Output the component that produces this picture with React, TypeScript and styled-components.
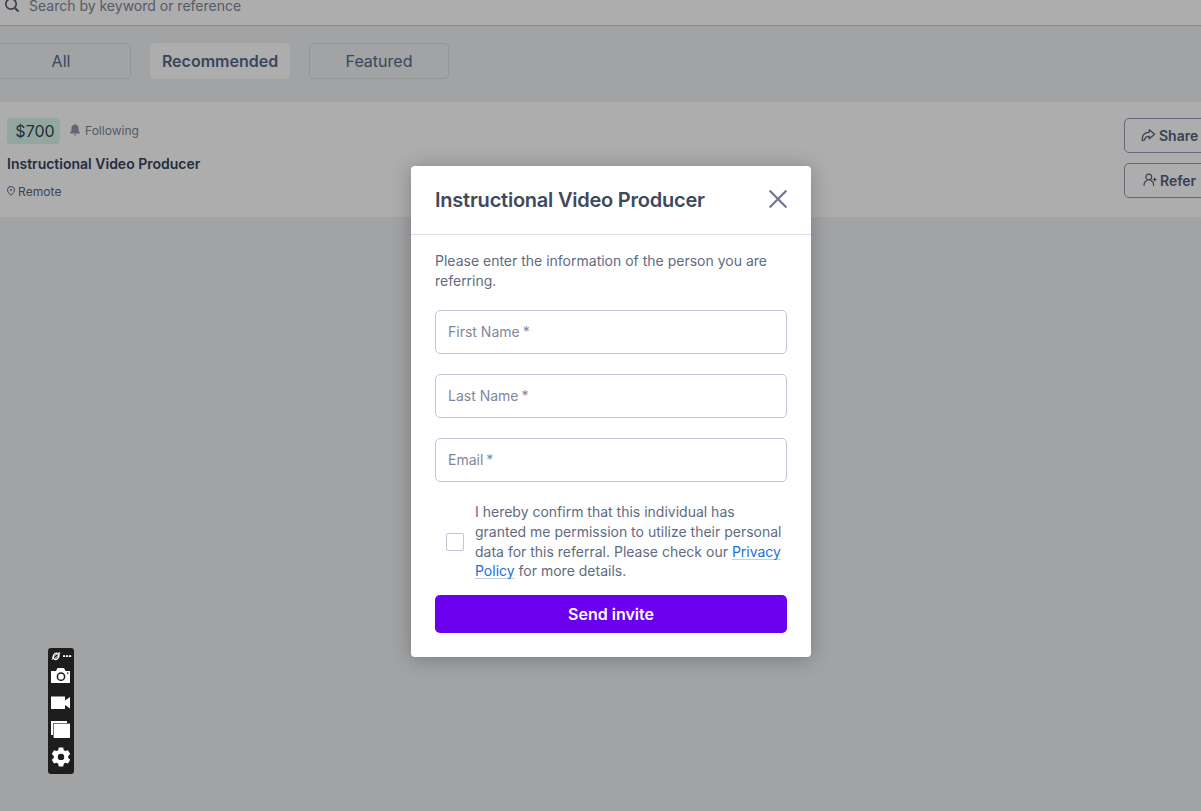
import React from 'react';
import styled, { createGlobalStyle } from 'styled-components';

const Global = createGlobalStyle`
  * { box-sizing: border-box; }
  body { margin: 0; overflow: hidden; font-family: Inter, sans-serif; background: #edf0f2; }
`;

const Page = styled.div`
  position: relative;
  width: 1201px;
  height: 811px;
  overflow: hidden;
  background: #edf0f2;
`;

const SearchBar = styled.header`
  display: flex;
  align-items: flex-start;
  gap: 9px;
  height: 26px;
  padding-left: 4px;
  background: #fff;
  border-bottom: 1px solid #c0c8d8;
  color: #7e8797;
  font-size: 14px;
  line-height: 12px;
  svg { flex: none; margin-top: -4px; color: #56617a; }
`;

const Tabs = styled.nav`
  display: flex;
  gap: 19px;
  padding: 17px 0 23px;
  margin-left: -9px;
`;

const Tab = styled.button<{ $active?: boolean }>`
  width: 140px;
  height: 36px;
  padding: 0;
  border: 1px solid ${(p) => (p.$active ? '#fff' : '#dadee4')};
  border-radius: 4px;
  background: ${(p) => (p.$active ? '#fff' : 'transparent')};
  color: #546a8a;
  font: ${(p) => (p.$active ? 600 : 400)} 16px/24px Inter, sans-serif;
`;

const JobCard = styled.article`
  display: flex;
  justify-content: space-between;
  height: 115px;
  padding: 16px 0 0 7px;
  background: #fff;
`;

const JobInfo = styled.div`
  display: flex;
  flex-direction: column;
`;

const PriceRow = styled.div`
  display: flex;
  align-items: center;
  gap: 9px;
`;

const Price = styled.span`
  width: 53px;
  height: 26px;
  padding-left: 3px;
  border-radius: 4px;
  background: #d9f7ea;
  color: #38445a;
  font-size: 16px;
  line-height: 26px;
  text-align: center;
`;

const Following = styled.span`
  display: flex;
  align-items: center;
  gap: 4px;
  color: #7e8797;
  font-size: 12px;
  letter-spacing: 0.02px;
  line-height: 16px;
  svg { margin-top: -2px; }
`;

const JobTitle = styled.h2`
  margin: 10px 0 0;
  color: #38445a;
  font-size: 14px;
  font-weight: 600;
  line-height: 20px;
`;

const Location = styled.span`
  display: flex;
  align-items: center;
  gap: 3px;
  margin-top: 10px;
  color: #56688a;
  font-size: 12px;
  letter-spacing: 0.08px;
  line-height: 16px;
  svg { margin-top: -2px; }
`;

const Actions = styled.div`
  display: flex;
  flex-direction: column;
  gap: 10px;
  width: 77px;
`;

const ActionButton = styled.button<{ $indent: number }>`
  display: flex;
  align-items: center;
  gap: 3px;
  width: 100px;
  height: 35px;
  padding: 0 0 0 ${(p) => p.$indent}px;
  border: 1px solid #929cb0;
  border-radius: 5px;
  background: #fff;
  color: #56617a;
  font: 600 14px/20px Inter, sans-serif;
  svg { margin-top: -2px; }
`;

const Backdrop = styled.div`
  position: absolute;
  inset: 0;
  display: flex;
  justify-content: center;
  align-items: flex-start;
  padding: 166px 0 0 21px;
  background: rgba(0, 0, 0, 0.32);
`;

const Dialog = styled.section`
  width: 400px;
  height: 491px;
  border-radius: 4px;
  background: #fff;
  box-shadow: 0 2px 20px rgba(0, 0, 0, 0.25);
`;

const DialogHeader = styled.header`
  display: flex;
  align-items: center;
  justify-content: space-between;
  height: 69px;
  padding: 0 24px;
  border-bottom: 1px solid #dcdde9;
`;

const DialogTitle = styled.h1`
  margin: 0;
  color: #40495a;
  font-size: 20px;
  font-weight: 600;
  letter-spacing: -0.23px;
  line-height: 28px;
`;

const CloseButton = styled.button`
  display: flex;
  padding: 0 0 2px;
  border: 0;
  background: none;
  color: #6e7891;
`;

const DialogBody = styled.form`
  display: flex;
  flex-direction: column;
  padding: 16px 24px 24px;
`;

const Text = styled.p`
  margin: 0;
  color: #5f6b80;
  font-size: 14px;
  line-height: 20px;
`;

const Fields = styled.div`
  display: flex;
  flex-direction: column;
  gap: 20px;
  margin: 19px 0 20px;
`;

const Field = styled.label`
  display: flex;
  align-items: center;
  gap: 3px;
  height: 44px;
  padding: 0 0 1px 12px;
  border: 1px solid #c3c5d9;
  border-radius: 5px;
  color: #7f879b;
  font-size: 14px;
  line-height: 20px;
`;

const Consent = styled.div`
  display: flex;
  align-items: center;
  gap: 11px;
  padding-left: 11px;
`;

const Checkbox = styled.span`
  flex: none;
  width: 18px;
  height: 18px;
  border: 1px solid #c3c5d9;
  border-radius: 2px;
`;

const ConsentText = styled(Text)`
  line-height: 19.8px;
`;

const PolicyLink = styled.a`
  color: #1a6fe0;
  text-decoration: underline 1px #b8d2f6;
  text-underline-offset: 2px;
  text-decoration-skip-ink: none;
`;

const SendButton = styled.button`
  height: 38px;
  margin-top: 14px;
  padding: 0;
  border: 0;
  border-radius: 5px;
  background: #6c00ee;
  color: #fff;
  font: 600 16px/24px Inter, sans-serif;
`;

const CaptureBar = styled.aside`
  position: absolute;
  left: 48px;
  top: 648px;
  display: flex;
  flex-direction: column;
  align-items: center;
  width: 26px;
  height: 126px;
  border-radius: 3px;
  background: #1d1d1d;
`;

const fields = ['First Name', 'Last Name', 'Email'];

export default function App() {
  return (
    <Page>
      <Global />
      <SearchBar>
        <svg width="16" height="16" viewBox="0 0 16 16" fill="none" stroke="currentColor" strokeWidth="1.7">
          <circle cx="7" cy="8" r="5.2" />
          <path d="M10.8 11.8L14.6 15.6" strokeWidth="2" />
        </svg>
        <span>Search by keyword or reference</span>
      </SearchBar>
      <Tabs>
        <Tab>All</Tab>
        <Tab $active>Recommended</Tab>
        <Tab>Featured</Tab>
      </Tabs>
      <JobCard>
        <JobInfo>
          <PriceRow>
            <Price>$700</Price>
            <Following>
              <svg width="12" height="12" viewBox="0 0 12 12" fill="#8f97a6">
                <path d="M6 0a.8.8 0 0 1 .8.8A3.7 3.7 0 0 1 9.6 4.4V7l1.3 1.5v.9H1.1v-.9L2.4 7V4.4A3.7 3.7 0 0 1 5.2.8.8.8 0 0 1 6 0z" />
                <path d="M4.7 10.2h2.6a1.3 1.3 0 0 1-2.6 0z" />
              </svg>
              Following
            </Following>
          </PriceRow>
          <JobTitle>Instructional Video Producer</JobTitle>
          <Location>
            <svg width="8" height="10" viewBox="0 0 8 10" fill="none" stroke="currentColor">
              <path d="M4 9.4C2.2 7.6.5 5.7.5 3.9a3.5 3.4 0 0 1 7 0C7.5 5.7 5.8 7.6 4 9.4z" />
              <circle cx="4" cy="4" r=".9" fill="currentColor" stroke="none" />
            </svg>
            Remote
          </Location>
        </JobInfo>
        <Actions>
          <ActionButton $indent={16}>
            <svg width="15" height="14" viewBox="0 0 15 14" fill="none" stroke="currentColor" strokeWidth="1.3" strokeLinejoin="round">
              <path d="M8.3 1.800L13.600 6.300 8.300 10.700V8.400C5.300 8.200 4.200 9.400 3.500 12L1.200 12.700C.8 8 3 4.300 8.300 4.100z" />
            </svg>
            Share
          </ActionButton>
          <ActionButton $indent={18}>
            <svg width="14" height="14" viewBox="0 0 14 14" fill="none" stroke="currentColor" strokeWidth="1.2" strokeLinecap="round">
              <circle cx="5.8" cy="4" r="2.9" />
              <path d="M1 12.5c0-2.6 1.2-4.3 3-5M10.6 12.5c0-2.6-1.2-4.3-3-5M10.2 6.500h3M11.700 5v3" />
            </svg>
            Refer
          </ActionButton>
        </Actions>
      </JobCard>

      <Backdrop>
        <Dialog>
          <DialogHeader>
            <DialogTitle>Instructional Video Producer</DialogTitle>
            <CloseButton type="button" aria-label="Close">
              <svg width="18" height="18" viewBox="0 0 18 18" fill="none" stroke="currentColor" strokeWidth="2.3" strokeLinecap="round">
                <path d="M1.3 1.3L16.7 16.7M16.7 1.3L1.3 16.7" />
              </svg>
            </CloseButton>
          </DialogHeader>
          <DialogBody>
            <Text>Please enter the information of the person you are referring.</Text>
            <Fields>
              {fields.map((name) => (
                <Field key={name}>
                  {name}
                  <span>*</span>
                </Field>
              ))}
            </Fields>
            <Consent>
              <Checkbox />
              <ConsentText>
                I hereby confirm that this individual has granted me permission to utilize their personal data for this
                referral. Please check our <PolicyLink>Privacy Policy</PolicyLink> for more details.
              </ConsentText>
            </Consent>
            <SendButton type="button">Send invite</SendButton>
          </DialogBody>
        </Dialog>
      </Backdrop>

      <CaptureBar>
        <svg width="26" height="126" viewBox="0 0 26 126" fill="#fff">
          <g fill="none" stroke="#fff" strokeWidth="1.3">
            <ellipse cx="8" cy="8.3" rx="2.6" ry="3.200" transform="rotate(35 8 8.3)" />
            <path d="M4.5 11.8C3.5 11 6 8 8.5 6.3S12 4.3 11.8 5.2 9.5 8.6 7 10.3" strokeWidth="1" />
          </g>
          <path d="M15 7.3h2.200v1.600H15zM18 7.300h2.200v1.600H18zM21 7.300h2.200v1.600H21z" />
          <path d="M3 23h5l1.500-3h6.500l1.500 3H22v12H3z" />
          <circle cx="13" cy="28.7" r="3.6" fill="none" stroke="#1d1d1d" strokeWidth="1.5" />
          <path d="M19 24.5h1.500v1.200H19z" fill="#1d1d1d" />
          <path d="M3 48.5h14v4l5-3.500v11.500l-5-3.500v4H3z" />
          <path d="M3 73h16v2H5v12H3z" />
          <path d="M5 75h17v15H5z" fill="#777" />
          <path d="M6 76h16v14H6z" />
          <path
            fillRule="evenodd"
            d="M10.8 99.5h4.400l.6 2.700 1.600.9 2.600-.8 2.200 3.800-2 1.900v1.900l2 1.900-2.200 3.800-2.600-.8-1.600.9-.6 2.700h-4.400l-.6-2.700-1.600-.9-2.600.8-2.200-3.800 2-1.900v-1.900l-2-1.900L6 102.300l2.600.8 1.600-.9zM13 105.700a3.200 3.200 0 1 0 0 6.400 3.200 3.200 0 0 0 0-6.400z"
          />
        </svg>
      </CaptureBar>
    </Page>
  );
}
